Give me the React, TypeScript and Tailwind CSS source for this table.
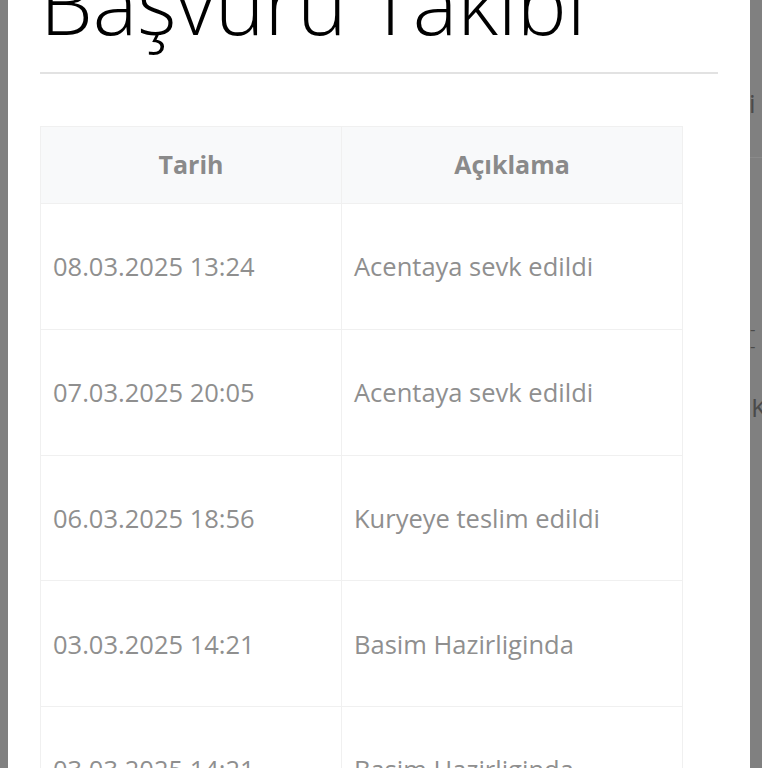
import React from 'react';

const rows = [
  { date: '08.03.2025 13:24', note: 'Acentaya sevk edildi' },
  { date: '07.03.2025 20:05', note: 'Acentaya sevk edildi' },
  { date: '06.03.2025 18:56', note: 'Kuryeye teslim edildi' },
  { date: '03.03.2025 14:21', note: 'Basim Hazirliginda' },
  { date: '03.03.2025 14:21', note: 'Basim Hazirliginda' },
];

const App: React.FC = () => {
  return (
    <div className="w-[768px] h-[768px] overflow-hidden flex bg-[#808080] font-['Open_Sans',sans-serif]">
      <div className="w-[8px] shrink-0" />

      <div className="w-[742px] shrink-0 bg-white px-8 overflow-hidden">
        <h1 className="mt-[-39px] text-[84px] leading-[84px] font-light text-black whitespace-nowrap">
          Başvuru Takibi
        </h1>
        <div className="mt-[27px] h-[2px] bg-[#e2e2e2]" />

        <table className="mt-[52px] w-[642px] table-fixed border-collapse">
          <thead>
            <tr className="h-[77px] bg-[#f8f9fa]">
              <th className="w-[301px] border border-[#f0f0f0] text-[25px] font-bold text-[#8a8a8a] text-center">
                Tarih
              </th>
              <th className="w-[341px] border border-[#f0f0f0] text-[25px] font-bold text-[#8a8a8a] text-center">
                Açıklama
              </th>
            </tr>
          </thead>
          <tbody>
            {rows.map((row, i) => (
              <tr key={i} className="h-[125.75px]">
                <td className="border border-[#f0f0f0] pl-3 text-[25.5px] text-[#8f8f8f] whitespace-nowrap">
                  {row.date}
                </td>
                <td className="border border-[#f0f0f0] pl-3 text-[25.5px] text-[#8f8f8f] whitespace-nowrap">
                  {row.note}
                </td>
              </tr>
            ))}
          </tbody>
        </table>
      </div>

      {/* backdrop strip: page text peeking out behind the modal */}
      <div className="w-[12px] shrink-0 overflow-hidden flex flex-col text-[#4a4a4a] leading-none">
        <span className="mt-[90px] ml-[-1px] text-[26px] h-[26px]">i</span>
        <div className="mt-[41px] h-px bg-[#8a8a8a]" />
        <span className="mt-[162px] text-[17px] h-[17px] leading-[17px]">-</span>
        <span className="text-[17px] h-[17px] leading-[17px]">-</span>
        <span className="mt-[40px] ml-[1px] text-[26px]">K</span>
      </div>
      <div className="w-[6px] shrink-0 bg-white" />
    </div>
  );
};

export default App;
